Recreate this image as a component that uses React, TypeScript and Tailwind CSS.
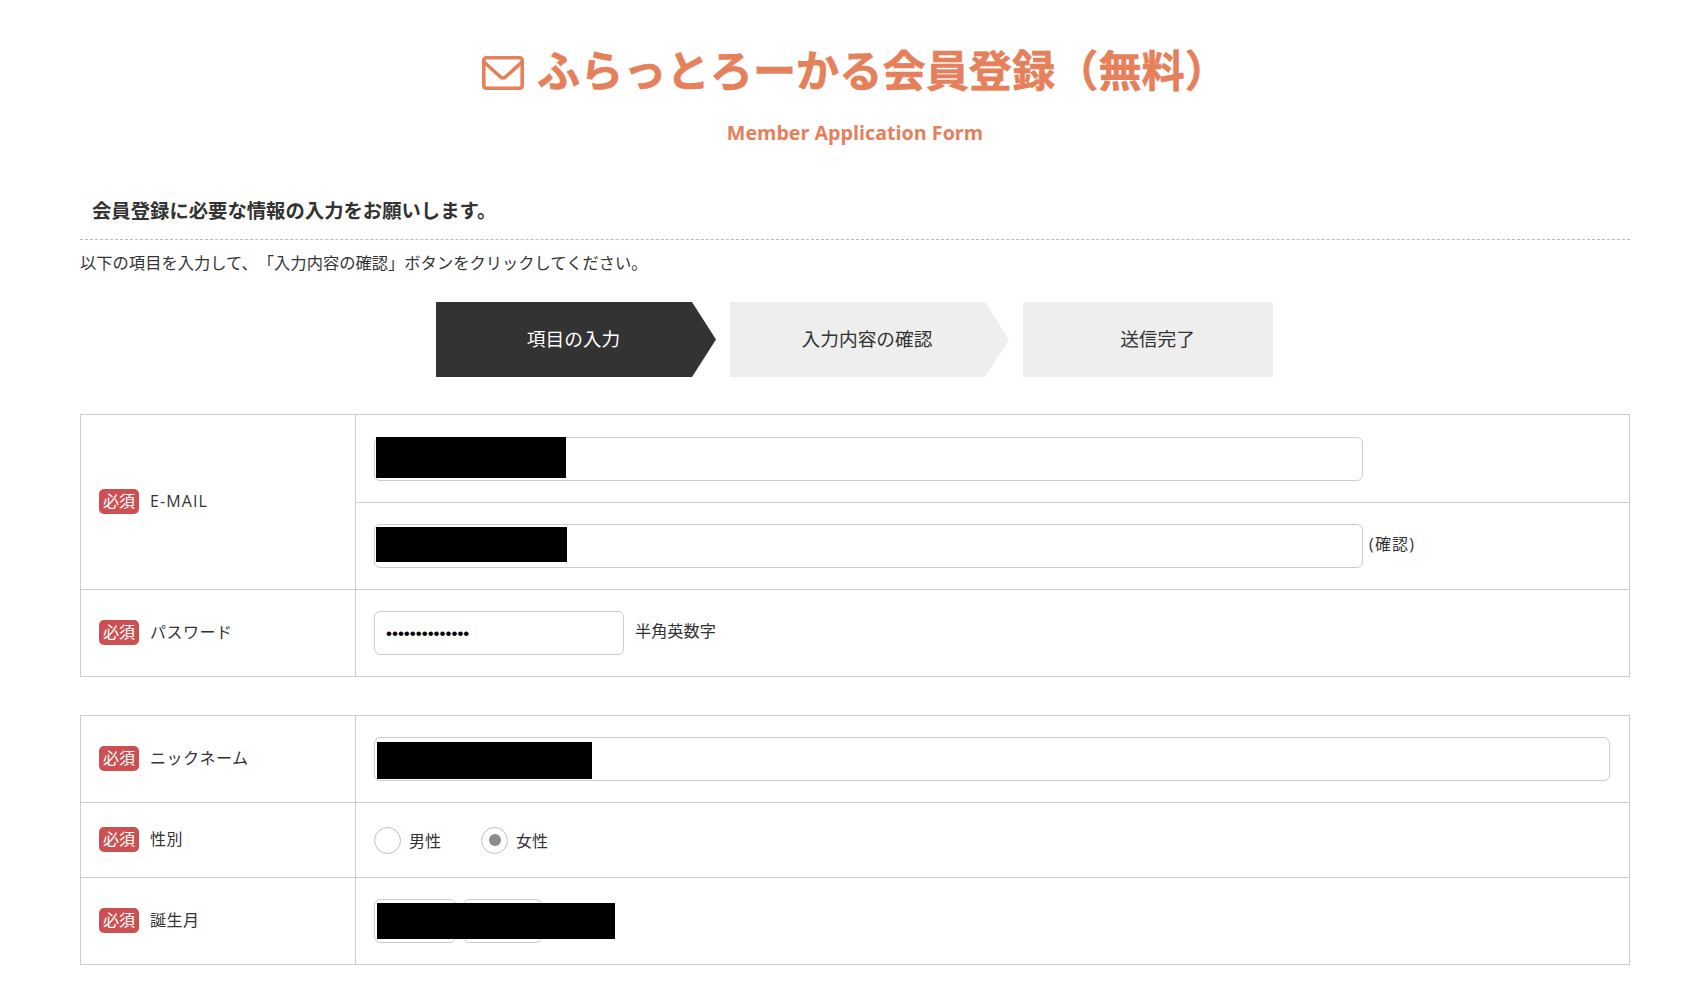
const jp = "font-['Open_Sans','Noto_Sans_CJK_JP',sans-serif] [text-spacing-trim:space-all]";

function Badge() {
  return (
    <span className="inline-flex items-center justify-center w-[40px] h-[25px] rounded-[5px] bg-[#cc5052] text-white text-[16px] leading-none shrink-0">
      必須
    </span>
  );
}

function Label({ text, wide }: { text: string; wide?: boolean }) {
  return (
    <div className="flex items-center gap-[11px] pl-[18px] pb-[2px]">
      <Badge />
      <span className={`text-[16px] leading-none text-[#333] ${wide ? "tracking-[1.1px]" : "tracking-[0.5px]"}`}>{text}</span>
    </div>
  );
}

function Redact({ w, h, x = 1, y = 1 }: { w: number; h: number; x?: number; y?: number }) {
  return <div className="absolute bg-black" style={{ width: w, height: h, left: x, top: y }} />;
}

function Box({ className, children }: { className: string; children?: React.ReactNode }) {
  return (
    <div className={`relative h-[44px] bg-white border border-[#ccc] rounded-[6px] ${className}`}>{children}</div>
  );
}

function Radio({ checked, label }: { checked?: boolean; label: string }) {
  return (
    <div className="flex items-center gap-[8px]">
      <span className="flex items-center justify-center w-[27px] h-[27px] rounded-full border border-[#bbb] bg-white">
        {checked && <span className="w-[12px] h-[12px] rounded-full bg-[#8c8c8c]" />}
      </span>
      <span className="text-[16px] leading-none text-[#333] pt-[2px]">{label}</span>
    </div>
  );
}

function Step({ label, dark, arrow, w }: { label: string; dark?: boolean; arrow?: boolean; w: number }) {
  const bg = dark ? "bg-[#333]" : "bg-[#eee]";
  const color = dark ? "text-white" : "text-[#333]";
  return (
    <div className="flex h-[75px]">
      <div className={`${bg} ${color} pl-[19px] flex items-center justify-center text-[18.7px] leading-none`} style={{ width: w }}>
        {label}
      </div>
      {arrow && (
        <svg width="24" height="75" viewBox="0 0 24 75" className="block">
          <polygon points="0,0 24,37.5 0,75" fill={dark ? "#333333" : "#eeeeee"} />
        </svg>
      )}
    </div>
  );
}

export default function App() {
  const td = "border border-[#ccc]";
  return (
    <div className={`${jp} bg-white min-h-[991px] text-[#333] overflow-hidden`}>
      <div className="w-[1550px] ml-[80px]">
        <header className="pt-[44px] flex flex-col items-center">
          <h1 className="flex items-center gap-[13px] text-[43.2px] leading-[54px] font-bold text-[#e5805a] [-webkit-text-stroke:0.6px_#e5805a]">
            <svg width="42" height="34" viewBox="0 0 42 34" fill="none" stroke="#e5805a" strokeWidth="3.6" className="mt-[3px]">
              <rect x="1.8" y="1.8" width="38.4" height="30.4" rx="2.5" />
              <path d="M2 6 L18.5 21 Q21 23 23.5 21 L40 6" />
            </svg>
            <span>ふらっとろーかる会員登録（無料）</span>
          </h1>
          <p className="mt-[21px] text-[19.7px] leading-[28px] font-bold text-[#e5805a]">Member Application Form</p>
        </header>

        <h2 className="mt-[50px] pl-[12px] text-[19.35px] leading-[28px] font-bold text-[#333] pb-[14px] border-b border-dashed border-[#bbb]">
          会員登録に必要な情報の入力をお願いします。
        </h2>
        <p className="mt-[11px] text-[16.3px] leading-[24px] text-[#333]">
          以下の項目を入力して、「入力内容の確認」ボタンをクリックしてください。
        </p>

        <div className="mt-[27px] ml-[356px] flex gap-[14px]">
          <Step label="項目の入力" dark arrow w={256} />
          <Step label="入力内容の確認" arrow w={255} />
          <Step label="送信完了" w={250} />
        </div>

        <table className="mt-[37px] w-full border-collapse table-fixed">
          <colgroup>
            <col className="w-[275px]" />
            <col />
          </colgroup>
          <tbody>
            <tr className="h-[88px]">
              <td rowSpan={2} className={td}><Label text="E-MAIL" wide /></td>
              <td className={`${td} pl-[18px]`}>
                <Box className="w-[989px]"><Redact w={190} h={41} x={1} y={-1} /></Box>
              </td>
            </tr>
            <tr className="h-[87px]">
              <td className={`${td} pl-[18px]`}>
                <div className="flex items-center gap-[6px]">
                  <Box className="w-[989px]"><Redact w={191} h={35} x={1} y={2} /></Box>
                  <span className="text-[16px] leading-none tracking-[1.2px] pb-[4px]">(確認)</span>
                </div>
              </td>
            </tr>
            <tr className="h-[87px]">
              <td className={td}><Label text="パスワード" /></td>
              <td className={`${td} pl-[18px]`}>
                <div className="flex items-center gap-[11px]">
                  <Box className="w-[250px] flex items-center pl-[11px]">
                    <span className="text-[17px] leading-none text-black font-['Liberation_Sans',sans-serif]">••••••••••••••</span>
                  </Box>
                  <span className="text-[16.2px] leading-none pb-[4px]">半角英数字</span>
                </div>
              </td>
            </tr>
          </tbody>
        </table>

        <table className="mt-[38px] w-full border-collapse table-fixed">
          <colgroup>
            <col className="w-[275px]" />
            <col />
          </colgroup>
          <tbody>
            <tr className="h-[87px]">
              <td className={td}><Label text="ニックネーム" /></td>
              <td className={`${td} pl-[18px] pr-[19px]`}>
                <Box className="w-full"><Redact w={215} h={37} x={2} y={4} /></Box>
              </td>
            </tr>
            <tr className="h-[75px]">
              <td className={td}><Label text="性別" /></td>
              <td className={`${td} pl-[18px]`}>
                <div className="flex items-center gap-[40px]">
                  <Radio label="男性" />
                  <Radio checked label="女性" />
                </div>
              </td>
            </tr>
            <tr className="h-[87px]">
              <td className={td}><Label text="誕生月" /></td>
              <td className={`${td} pl-[18px]`}>
                <div className="relative flex gap-[7px] w-fit">
                  <Box className="w-[82px]" />
                  <Box className="w-[79px]" />
                  <Redact w={238} h={36} x={3} y={4} />
                </div>
              </td>
            </tr>
          </tbody>
        </table>
      </div>
    </div>
  );
}
